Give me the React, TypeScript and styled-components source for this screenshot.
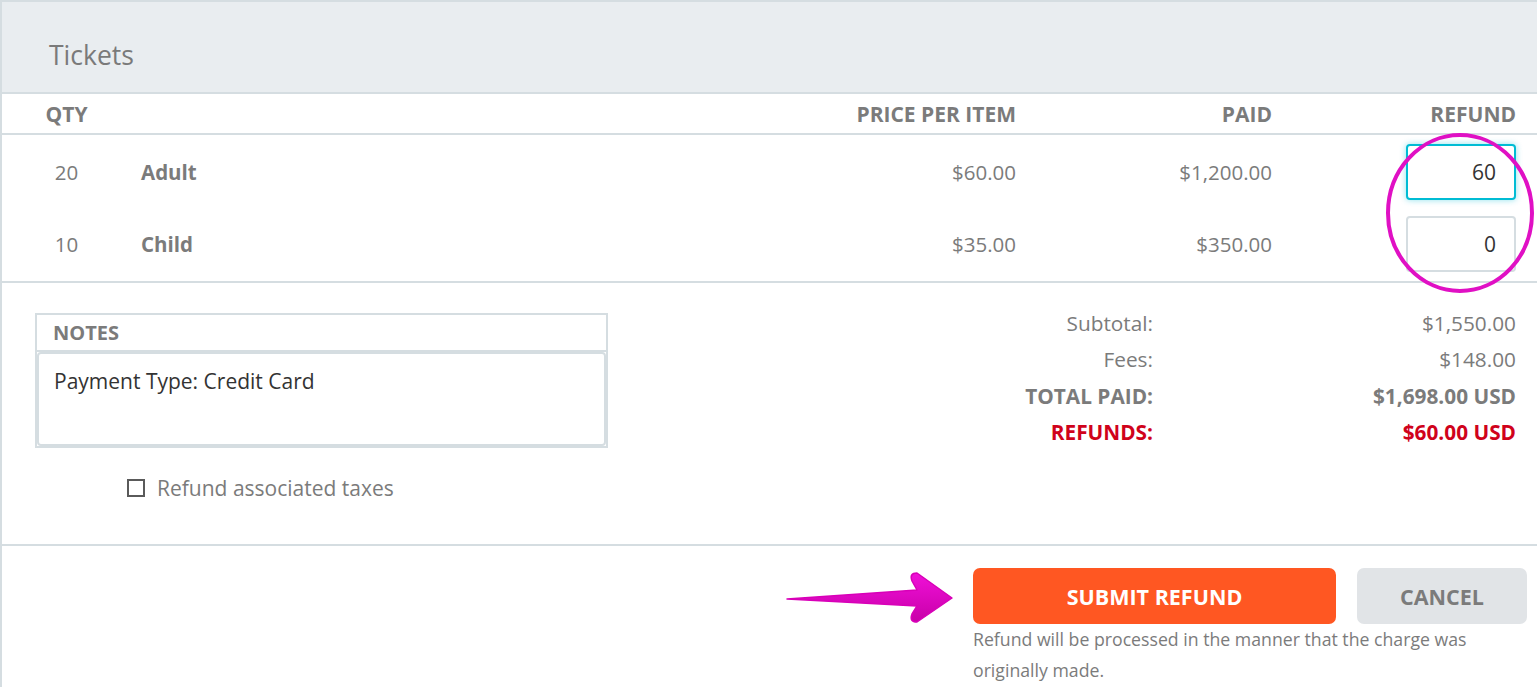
import styled, { createGlobalStyle } from 'styled-components'

const GlobalStyle = createGlobalStyle`
  html, body {
    margin: 0;
    padding: 0;
    background: #ffffff;
    overflow: hidden;
  }
  body {
    font-family: "Open Sans", "Liberation Sans", sans-serif;
    color: #7b7b7b;
  }
  * {
    box-sizing: border-box;
  }
`

const LINE = '#d5dde1'

const Panel = styled.div`
  position: relative;
  width: 1537px;
  height: 687px;
  border-left: 2px solid ${LINE};
  border-top: 2px solid ${LINE};
  display: flex;
  flex-direction: column;
`

const PanelHeader = styled.div`
  height: 92px;
  background: #e9edf0;
  border-bottom: 2px solid ${LINE};
  display: flex;
  align-items: center;
  padding-left: 47px;
  padding-top: 16px;
`

const Title = styled.h2`
  margin: 0;
  font-size: 26.5px;
  font-weight: 400;
  color: #7a7a7a;
`

const Row = styled.div<{ $head?: boolean; $height: number }>`
  display: grid;
  grid-template-columns: 45px 52px 1fr 300px 256px 244px;
  align-items: center;
  height: ${(p) => p.$height}px;
  padding: 0 21px 0 42px;
  font-size: ${(p) => (p.$head ? '21px' : '20.5px')};
  font-weight: ${(p) => (p.$head ? 700 : 400)};
  text-transform: ${(p) => (p.$head ? 'uppercase' : 'none')};
  color: #7b7b7b;
`

const HeadRow = styled(Row)`
  border-bottom: 2px solid ${LINE};
`

const Body = styled.div`
  padding: 1px 0;
  border-bottom: 2px solid ${LINE};
`

const Qty = styled.div`
  text-align: center;
`

const Name = styled.div`
  grid-column: 3;
  font-weight: 700;
`

const Num = styled.div`
  text-align: right;
`

const RefundCell = styled.div`
  display: flex;
  justify-content: flex-end;
`

const RefundInput = styled.input<{ $focus?: boolean }>`
  width: 110px;
  height: 56px;
  border-radius: 4px;
  border: 2px solid ${(p) => (p.$focus ? '#00bcd4' : LINE)};
  box-shadow: ${(p) => (p.$focus ? '0 0 6px rgba(0, 188, 212, 0.45)' : 'none')};
  text-align: right;
  padding: 0 18px;
  font-family: "Open Sans", "Liberation Sans", sans-serif;
  font-size: 21px;
  color: #333;
  outline: none;
  background: #fff;
`

const Footer = styled.div`
  display: flex;
  height: 263px;
  border-bottom: 2px solid ${LINE};
  padding: 22px 21px 0 33px;
`

const LeftCol = styled.div`
  width: 573px;
  display: flex;
  flex-direction: column;
  padding-top: 8px;
`

const NotesBox = styled.div`
  border: 2px solid ${LINE};
`

const NotesHead = styled.div`
  height: 37px;
  border-bottom: 2px solid ${LINE};
  padding-left: 16px;
  display: flex;
  align-items: center;
  font-size: 20px;
  font-weight: 700;
  color: #7b7b7b;
`

const NotesText = styled.div`
  height: 94px;
  border: 2px solid ${LINE};
  border-radius: 4px;
  padding: 13px 15px;
  font-size: 21px;
  color: #333;
`

const CheckLine = styled.label`
  display: flex;
  align-items: center;
  gap: 12px;
  margin: 26px 0 0 92px;
  font-size: 21px;
  color: #7b7b7b;
`

const Box = styled.span`
  width: 18px;
  height: 18px;
  border: 2px solid #5a5a5a;
  display: inline-block;
`

const Totals = styled.div`
  flex: 1;
  display: grid;
  grid-template-columns: 1fr 363px;
  grid-auto-rows: 36.3px;
  align-content: start;
  align-items: center;
  font-size: 20.8px;
`

const TotalLabel = styled.div<{ $strong?: boolean; $red?: boolean }>`
  text-align: right;
  font-weight: ${(p) => (p.$strong ? 700 : 400)};
  color: ${(p) => (p.$red ? '#d0021b' : '#7b7b7b')};
`

const TotalValue = styled(TotalLabel)``

const Actions = styled.div`
  display: flex;
  justify-content: flex-end;
  padding: 22px 10px 0 0;
`

const ActionCol = styled.div`
  width: 554px;
  display: flex;
  flex-direction: column;
`

const Buttons = styled.div`
  display: flex;
  gap: 21px;
`

const Button = styled.button<{ $primary?: boolean }>`
  height: 56px;
  width: ${(p) => (p.$primary ? '363px' : '170px')};
  border: none;
  border-radius: 7px;
  background: ${(p) => (p.$primary ? '#ff5722' : '#e1e4e7')};
  color: ${(p) => (p.$primary ? '#ffffff' : '#7b7b7b')};
  font-family: "Open Sans", "Liberation Sans", sans-serif;
  font-size: 21.5px;
  font-weight: 700;
  text-transform: uppercase;
  cursor: pointer;
`

const Help = styled.p`
  margin: 0;
  font-size: 17.7px;
  line-height: 31px;
  color: #7b7b7b;
`

const Annotation = styled.svg`
  position: absolute;
  left: 0;
  top: 0;
  pointer-events: none;
`

const tickets = [
  { qty: 20, name: 'Adult', price: '$60.00', paid: '$1,200.00', refund: '60', focus: true },
  { qty: 10, name: 'Child', price: '$35.00', paid: '$350.00', refund: '0', focus: false },
]

export default function App() {
  return (
    <>
      <GlobalStyle />
      <Panel>
        <PanelHeader>
          <Title>Tickets</Title>
        </PanelHeader>

        <HeadRow $head $height={41}>
          <Qty>QTY</Qty>
          <Name />
          <Num>Price per item</Num>
          <Num>Paid</Num>
          <Num>Refund</Num>
        </HeadRow>

        <Body>
          {tickets.map((t) => (
            <Row key={t.name} $height={72}>
              <Qty>{t.qty}</Qty>
              <Name>{t.name}</Name>
              <Num>{t.price}</Num>
              <Num>{t.paid}</Num>
              <RefundCell>
                <RefundInput $focus={t.focus} defaultValue={t.refund} />
              </RefundCell>
            </Row>
          ))}
        </Body>

        <Footer>
          <LeftCol>
            <NotesBox>
              <NotesHead>NOTES</NotesHead>
              <NotesText>Payment Type: Credit Card</NotesText>
            </NotesBox>
            <CheckLine>
              <Box />
              Refund associated taxes
            </CheckLine>
          </LeftCol>
          <Totals>
            <TotalLabel>Subtotal:</TotalLabel>
            <TotalValue>$1,550.00</TotalValue>
            <TotalLabel>Fees:</TotalLabel>
            <TotalValue>$148.00</TotalValue>
            <TotalLabel $strong>TOTAL PAID:</TotalLabel>
            <TotalValue $strong>$1,698.00 USD</TotalValue>
            <TotalLabel $strong $red>REFUNDS:</TotalLabel>
            <TotalValue $strong $red>$60.00 USD</TotalValue>
          </Totals>
        </Footer>

        <Actions>
          <ActionCol>
            <Buttons>
              <Button $primary>Submit Refund</Button>
              <Button>Cancel</Button>
            </Buttons>
            <Help>Refund will be processed in the manner that the charge was originally made.</Help>
          </ActionCol>
        </Actions>

        <Annotation width="1537" height="687" viewBox="0 0 1537 687">
          <defs>
            <linearGradient id="arrowFill" x1="0" y1="0" x2="0" y2="1">
              <stop offset="0" stopColor="#f010d8" />
              <stop offset="1" stopColor="#c800a8" />
            </linearGradient>
          </defs>
          <ellipse cx="1458" cy="211" rx="72" ry="78" fill="none" stroke="#e010c4" strokeWidth="4" />
          <path
            d="M785 597 L915 588 L910 579 Q907 571 915 571 L950 596 L915 620 Q907 620 910 612 L915 604 Z"
            fill="url(#arrowFill)"
            stroke="#d800b8"
            strokeWidth="1.5"
            strokeLinejoin="round"
          />
        </Annotation>
      </Panel>
    </>
  )
}
